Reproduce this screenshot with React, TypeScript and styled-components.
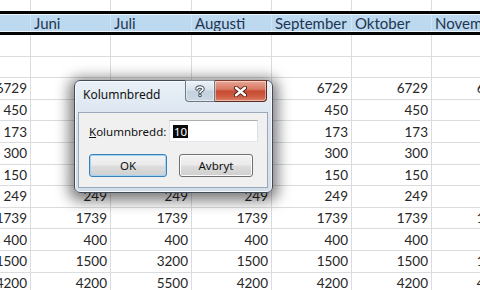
import React from 'react';
import styled, { createGlobalStyle } from 'styled-components';

const Global = createGlobalStyle`
  html, body { margin: 0; padding: 0; background: #fff; }
  body { width: 480px; height: 290px; overflow: hidden; }
`;

const Screen = styled.div`
  position: relative;
  width: 480px;
  height: 290px;
  overflow: hidden;
  background: #fff;
  font-family: Lato, "Liberation Sans", sans-serif;
`;

const Sheet = styled.div`
  display: flex;
  flex-direction: column;
  width: 520px;
`;

const Row = styled.div<{ $top?: boolean }>`
  display: flex;
  flex: none;
  box-sizing: border-box;
  height: ${p => (p.$top ? '12px' : '21.6px')};
  border-bottom: 1px solid #dadcdd;
`;

const HeaderRow = styled.div`
  display: flex;
  flex: none;
  box-sizing: border-box;
  height: 24px;
  margin-top: -1px;
  border-top: 3px solid #050505;
  border-bottom: 3px solid #050505;
`;

const HeaderInner = styled.div`
  display: flex;
  flex: 1;
  background: #bcd9ef;
  border-top: 1px solid #eef6fc;
  border-bottom: 1px solid #eef6fc;
`;

const Cell = styled.div<{ $w: number; $head?: boolean }>`
  flex: none;
  width: ${p => p.$w}px;
  box-sizing: border-box;
  border-right: 1px solid ${p => (p.$head ? '#cfe3f2' : '#dadcdd')};
  padding: 0 3px;
  display: flex;
  align-items: center;
  justify-content: ${p => (p.$head ? 'flex-start' : 'flex-end')};
  font-size: ${p => (p.$head ? '15px' : '13.5px')};
  color: ${p => (p.$head ? '#1e3552' : '#262626')};
  white-space: nowrap;
  overflow: hidden;
`;

const widths = [31, 80, 81, 80, 80, 80, 80];
const headers = ['', 'Juni', 'Juli', 'Augusti', 'September', 'Oktober', 'November'];

const base = ['6729', '450', '173', '300', '150', '249', '1739', '400', '1500', '4200'];
const col2 = ['6729', '450', '173', '300', '150', '249', '1739', '400', '3200', '5500'];
const columns = [base, base, col2, base, base, base, base];

/* ---------- dialog ---------- */

const Window = styled.div`
  position: absolute;
  left: 74px;
  top: 80px;
  width: 199px;
  height: 113px;
  box-sizing: border-box;
  border: 1px solid #434d59;
  border-radius: 6px;
  background: linear-gradient(180deg, #e9f0f7 0%, #dbe5f0 35%, #d2deea 100%);
  box-shadow: inset 0 0 0 1px rgba(255, 255, 255, 0.75), 0 3px 14px 5px rgba(0, 0, 0, 0.5);
  display: flex;
  flex-direction: column;
  font-family: "Noto Sans", "Open Sans", sans-serif;
  color: #000;
`;

const TitleBar = styled.div`
  height: 31px;
  flex: none;
  display: flex;
  align-items: flex-start;
`;

const Title = styled.div`
  padding: 6px 0 0 8px;
  font-size: 12px;
  line-height: 16px;
  color: #111;
`;

const Caption = styled.div`
  margin-left: auto;
  margin-right: 5px;
  margin-top: -1px;
  display: flex;
`;

const CapButton = styled.div<{ $close?: boolean }>`
  height: 22px;
  box-sizing: border-box;
  display: flex;
  align-items: center;
  justify-content: center;
  width: ${p => (p.$close ? '52px' : '30px')};
  border: 1px solid ${p => (p.$close ? '#5a2a20' : '#6c7987')};
  border-top-color: ${p => (p.$close ? '#7a3a2e' : '#8793a0')};
  border-left-width: ${p => (p.$close ? '0' : '1px')};
  border-radius: ${p => (p.$close ? '0 0 4px 0' : '0 0 0 4px')};
  background: ${p =>
    p.$close
      ? 'linear-gradient(180deg, #e9a797 0%, #d87a64 40%, #c74b33 52%, #cf5f44 80%, #dc8468 100%)'
      : 'linear-gradient(180deg, #eef3f8 0%, #d6e0ea 45%, #c4d1de 52%, #cbd7e3 100%)'};
  box-shadow: inset 0 0 0 1px rgba(255, 255, 255, 0.45);
`;

const HelpIcon = () => (
  <svg width="10" height="12" viewBox="0 0 10 12">
    <path
      d="M2 4 C2 1.5 8 1.2 8 4 C8 5.8 5 6 5 7.6 M5 10.2 L5 10.4"
      fill="none"
      stroke="#3f4a56"
      strokeWidth="3.4"
      strokeLinecap="round"
    />
    <path
      d="M2 4 C2 1.5 8 1.2 8 4 C8 5.8 5 6 5 7.6 M5 10.2 L5 10.4"
      fill="none"
      stroke="#ffffff"
      strokeWidth="1.6"
      strokeLinecap="round"
    />
  </svg>
);

const CloseIcon = () => (
  <svg width="13" height="11" viewBox="0 0 13 11">
    <path d="M2 1.8 L11 9.2 M11 1.8 L2 9.2" stroke="#4a1e16" strokeWidth="4.2" strokeLinecap="round" />
    <path d="M2 1.8 L11 9.2 M11 1.8 L2 9.2" stroke="#ffffff" strokeWidth="2.4" strokeLinecap="round" />
  </svg>
);

const Client = styled.div`
  flex: 1;
  margin: 0 4px 4px 3px;
  box-sizing: border-box;
  background: #f0f0f0;
  border: 1px solid #9aa9ba;
  padding: 7px 9px 0 10px;
  display: flex;
  flex-direction: column;
  gap: 12px;
`;

const FieldRow = styled.div`
  display: flex;
  align-items: center;
  height: 22px;
`;

const Label = styled.div`
  font-size: 11.5px;
  color: #111;
`;

const Input = styled.div`
  margin-left: auto;
  width: 89px;
  height: 22px;
  box-sizing: border-box;
  border: 1px solid #abadb3;
  border-left-color: #e2e3ea;
  border-right-color: #dbdfe6;
  border-bottom-color: #e3e9ef;
  background: #fff;
  display: flex;
  align-items: center;
  padding-left: 3px;
  font-size: 11.5px;
`;

const Selected = styled.span`
  background: #0a0a0a;
  color: #fff;
  padding: 0 1px;
  line-height: 13px;
`;

const ButtonRow = styled.div`
  display: flex;
  gap: 12px;
`;

const Button = styled.div<{ $w: number; $default?: boolean }>`
  width: ${p => p.$w}px;
  height: 23px;
  box-sizing: border-box;
  border: 1px solid ${p => (p.$default ? '#3c7fb1' : '#707070')};
  border-radius: 3px;
  background: linear-gradient(180deg, #f2f2f2 0%, #ebebeb 48%, #dddddd 52%, #cfcfcf 100%);
  box-shadow: inset 0 0 0 1px ${p => (p.$default ? '#9fd6f4' : '#fbfbfb')};
  display: flex;
  align-items: center;
  justify-content: center;
  font-size: 11.5px;
  color: #111;
`;

export default function App() {
  return (
    <Screen>
      <Global />
      <Sheet>
        <Row $top>
          {widths.map((w, i) => (
            <Cell key={i} $w={w} />
          ))}
        </Row>
        <HeaderRow>
          <HeaderInner>
            {widths.map((w, i) => (
              <Cell key={i} $w={w} $head>
                {headers[i]}
              </Cell>
            ))}
          </HeaderInner>
        </HeaderRow>
        {[0, 1].map(r => (
          <Row key={'e' + r}>
            {widths.map((w, i) => (
              <Cell key={i} $w={w} />
            ))}
          </Row>
        ))}
        {base.map((_, r) => (
          <Row key={r}>
            {widths.map((w, i) => (
              <Cell key={i} $w={w}>
                {columns[i][r]}
              </Cell>
            ))}
          </Row>
        ))}
      </Sheet>

      <Window>
        <TitleBar>
          <Title>Kolumnbredd</Title>
          <Caption>
            <CapButton>
              <HelpIcon />
            </CapButton>
            <CapButton $close>
              <CloseIcon />
            </CapButton>
          </Caption>
        </TitleBar>
        <Client>
          <FieldRow>
            <Label>
              <u>K</u>olumnbredd:
            </Label>
            <Input>
              <Selected>10</Selected>
            </Input>
          </FieldRow>
          <ButtonRow>
            <Button $w={78} $default>
              OK
            </Button>
            <Button $w={74}>Avbryt</Button>
          </ButtonRow>
        </Client>
      </Window>
    </Screen>
  );
}
